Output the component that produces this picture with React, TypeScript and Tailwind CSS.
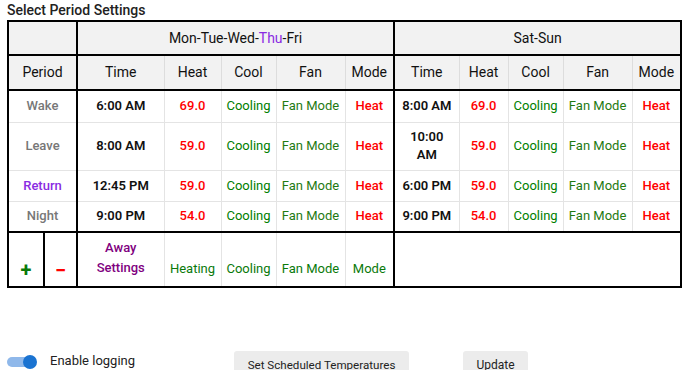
import { useState } from 'react';

interface Slot {
  time: string;
  heat: string;
}

interface Period {
  name: string;
  color: string;
  h: string;
  weekday: Slot;
  weekend: Slot;
}

const PERIODS: Period[] = [
  { name: 'Wake', color: 'text-[#777777]', h: 'h-[32px]', weekday: { time: '6:00 AM', heat: '69.0' }, weekend: { time: '8:00 AM', heat: '69.0' } },
  { name: 'Leave', color: 'text-[#777777]', h: 'h-[48px]', weekday: { time: '8:00 AM', heat: '59.0' }, weekend: { time: '10:00 AM', heat: '59.0' } },
  { name: 'Return', color: 'text-[#8a2be2]', h: 'h-[31px]', weekday: { time: '12:45 PM', heat: '59.0' }, weekend: { time: '6:00 PM', heat: '59.0' } },
  { name: 'Night', color: 'text-[#777777]', h: 'h-[31px]', weekday: { time: '9:00 PM', heat: '54.0' }, weekend: { time: '9:00 PM', heat: '54.0' } },
];

const th = 'bg-[#f2f2f2] border border-[#dddddd] font-normal text-[14px] text-[#111]';
const td = 'border border-[#e4e4e4] text-center text-[13px] px-1 leading-[18px]';

function SlotCells({ slot, first }: { slot: Slot; first?: boolean }) {
  return (
    <>
      <td className={`${td} font-semibold text-[#111] ${first ? '' : 'border-l-2 border-l-black'}`}>{slot.time}</td>
      <td className={`${td} font-medium text-[#ff0000]`}>{slot.heat}</td>
      <td className={`${td} text-[#008000]`}>Cooling</td>
      <td className={`${td} text-[#1f7a12]`}>Fan Mode</td>
      <td className={`${td} font-medium text-[#ff0000]`}>Heat</td>
    </>
  );
}

export default function App() {
  const [logging, setLogging] = useState(true);

  return (
    <div className="w-[690px] h-[370px] overflow-hidden bg-white font-['Roboto',sans-serif]">
      <div className="pl-[7px] pt-[1px] text-[14px] font-medium text-[#222] leading-[18px]">Select Period Settings</div>

      <table className="ml-[7px] mt-[1px] w-[673px] table-fixed border-collapse border-2 border-black">
        <colgroup>
          <col className="w-[36px]" />
          <col className="w-[33px]" />
          <col className="w-[87px]" />
          <col className="w-[57px]" />
          <col className="w-[55px]" />
          <col className="w-[69px]" />
          <col className="w-[49px]" />
          <col className="w-[65px]" />
          <col className="w-[49px]" />
          <col className="w-[55px]" />
          <col className="w-[69px]" />
          <col className="w-[49px]" />
        </colgroup>
        <thead>
          <tr className="h-[34px] border-b-2 border-black">
            <th colSpan={2} className={`${th} border-r-2 border-r-black`} />
            <th colSpan={5} className={`${th} border-r-2 border-r-black`}>
              Mon-Tue-Wed-<span className="text-[#8a2be2]">Thu</span>-Fri
            </th>
            <th colSpan={5} className={th}>Sat-Sun</th>
          </tr>
          <tr className="h-[35px] border-b-2 border-black">
            <th colSpan={2} className={`${th} border-r-2 border-r-black`}>Period</th>
            <th className={th}>Time</th>
            <th className={th}>Heat</th>
            <th className={th}>Cool</th>
            <th className={th}>Fan</th>
            <th className={`${th} border-r-2 border-r-black`}>Mode</th>
            <th className={th}>Time</th>
            <th className={th}>Heat</th>
            <th className={th}>Cool</th>
            <th className={th}>Fan</th>
            <th className={th}>Mode</th>
          </tr>
        </thead>
        <tbody>
          {PERIODS.map((p) => (
            <tr key={p.name} className={p.h}>
              <td colSpan={2} className={`${td} font-medium ${p.color} border-r-2 border-r-black`}>{p.name}</td>
              <SlotCells slot={p.weekday} first />
              <SlotCells slot={p.weekend} />
            </tr>
          ))}
          <tr className="h-[55px] border-t-2 border-black">
            <td className={`${td} align-bottom pb-[6px] border-r-2 border-r-black text-[#0a7a0a] text-[20px] font-bold leading-[20px]`}>+</td>
            <td className={`${td} align-bottom pb-[6px] border-r-2 border-r-black text-[#ff0000] text-[20px] font-bold leading-[20px]`}>−</td>
            <td className={`${td} align-bottom pb-[8px] font-medium text-[#800080] leading-[20px]`}>Away<br />Settings</td>
            <td className={`${td} align-bottom pb-[8px] text-[#0a7a0a]`}>Heating</td>
            <td className={`${td} align-bottom pb-[8px] text-[#0a7a0a]`}>Cooling</td>
            <td className={`${td} align-bottom pb-[8px] text-[#0a7a0a]`}>Fan Mode</td>
            <td className={`${td} align-bottom pb-[8px] text-[#0a7a0a] border-r-2 border-r-black`}>Mode</td>
            <td colSpan={5} className="border-0" />
          </tr>
        </tbody>
      </table>

      <div className="mt-[62px] flex items-start">
        <button
          onClick={() => setLogging(!logging)}
          className="relative ml-[7px] mt-[5px] w-[30px] h-[14px] shrink-0"
        >
          <span className="absolute left-0 top-[2px] w-[28px] h-[10px] rounded-full bg-[#8fb8ea]" />
          <span className={`absolute top-0 w-[14px] h-[14px] rounded-full bg-[#1a73d1] ${logging ? 'left-[16px]' : 'left-0'}`} />
        </button>
        <span className="ml-[13px] mt-[2px] text-[13px] text-[#222] leading-[18px]">Enable logging</span>
        <button className="ml-[99px] mt-[1px] w-[175px] h-[28px] bg-[#ececec] rounded-[3px] text-[11.6px] leading-[16px] text-[#222] self-start">
          Set Scheduled Temperatures
        </button>
        <button className="ml-[54px] mt-[1px] w-[65px] h-[28px] bg-[#ececec] rounded-[3px] text-[12px] leading-[16px] text-[#222]">
          Update
        </button>
      </div>
    </div>
  );
}
